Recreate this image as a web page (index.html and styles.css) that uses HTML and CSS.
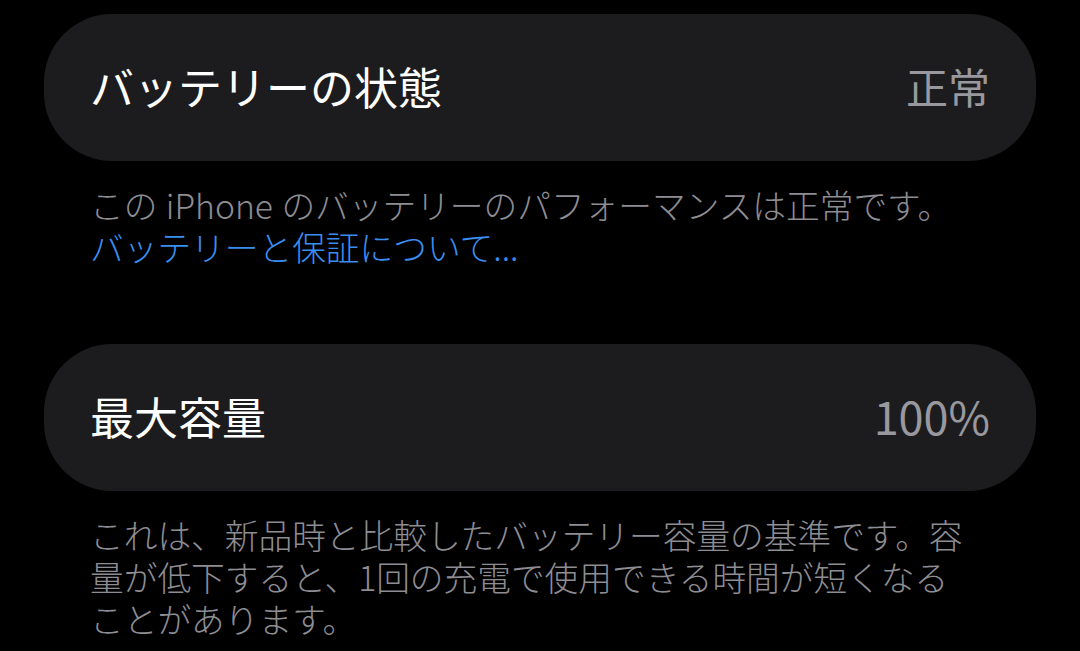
FILE: index.html
```html
<!DOCTYPE html>
<html lang="ja">
<head>
<meta charset="utf-8">
<link rel="stylesheet" href="styles.css">
</head>
<body>
<main class="page">
  <section class="group">
    <div class="cell">
      <span class="label">バッテリーの状態</span>
      <span class="value">正常</span>
    </div>
    <div class="footnote">
      <p>この<span class="latin">iPhone</span>のバッテリーのパフォーマンスは正常です。</p>
      <p class="link">バッテリーと保証について...</p>
    </div>
  </section>
  <section class="group second">
    <div class="cell">
      <span class="label">最大容量</span>
      <span class="value num">100%</span>
    </div>
    <div class="footnote">
      <p>これは、新品時と比較したバッテリー容量の基準です。容量が低下すると、1回の充電で使用できる時間が短くなることがあります。</p>
    </div>
  </section>
</main>
</body>
</html>
```
FILE: styles.css
```css
html, body {
  margin: 0;
  padding: 0;
  background: #000;
}
body {
  font-family: "Noto Sans CJK JP", "Noto Sans", sans-serif;
  color: #fff;
  width: 1080px;
  height: 651px;
  overflow: hidden;
}
.page {
  padding: 14px 44px 0 44px;
  display: flex;
  flex-direction: column;
}
.group.second {
  margin-top: 76px;
}
.cell {
  height: 147px;
  background: #1c1c1e;
  border-radius: 68px;
  display: flex;
  align-items: center;
  justify-content: space-between;
  padding: 0 46px 0 46px;
  box-sizing: border-box;
}
.label {
  font-size: 44px;
  color: #fff;
  margin-top: -4px;
}
.value {
  font-size: 42px;
  color: #98989e;
  margin-top: -4px;
}
.value.num {
  font-size: 45px;
}
.footnote {
  padding: 23px 0 0 46px;
  width: 880px;
  font-size: 33.7px;
  line-height: 42px;
  color: #8d8d93;
  font-weight: 300;
}
.footnote p {
  margin: 0;
}
.footnote .latin {
  margin: 0 0.25em;
}
.footnote .link {
  color: #3a8ef0;
}
```
